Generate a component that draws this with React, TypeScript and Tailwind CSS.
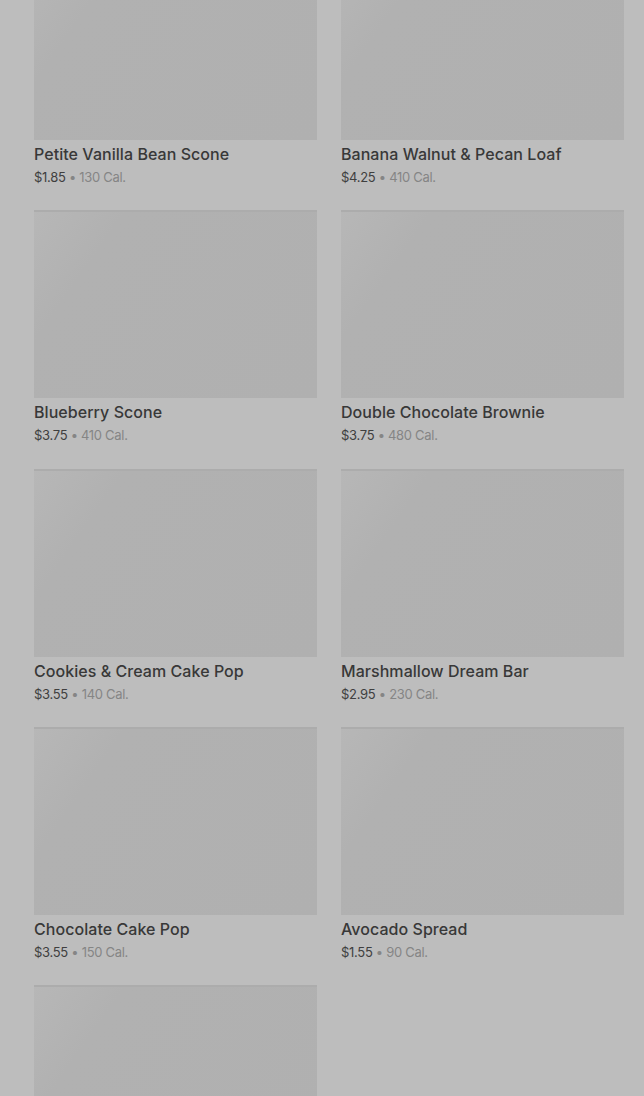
import React from 'react';

type Item = { name: string; price: string; cal: string };

const items: Item[] = [
  { name: 'Petite Vanilla Bean Scone', price: '$1.85', cal: '130 Cal.' },
  { name: 'Banana Walnut & Pecan Loaf', price: '$4.25', cal: '410 Cal.' },
  { name: 'Blueberry Scone', price: '$3.75', cal: '410 Cal.' },
  { name: 'Double Chocolate Brownie', price: '$3.75', cal: '480 Cal.' },
  { name: 'Cookies & Cream Cake Pop', price: '$3.55', cal: '140 Cal.' },
  { name: 'Marshmallow Dream Bar', price: '$2.95', cal: '230 Cal.' },
  { name: 'Chocolate Cake Pop', price: '$3.55', cal: '150 Cal.' },
  { name: 'Avocado Spread', price: '$1.55', cal: '90 Cal.' },
];

function Thumb() {
  // image placeholder, still loading
  return (
    <div className="h-[188px] w-full shrink-0 border-t-2 border-[#acacac] bg-[linear-gradient(125deg,#b7b7b7_0%,#b1b1b1_22%,#b0b0b0_100%)]" />
  );
}

function Card({ item }: { item: Item }) {
  return (
    <div className="flex flex-col">
      <Thumb />
      <div className="mt-0.5 h-6 text-base leading-6 font-medium text-[#383838] tracking-[0.05px]">{item.name}</div>
      <div className="h-[21px] pt-px text-[13px] leading-5 tracking-[-0.3px] text-[#3f3f3f]">
        {item.price}
        <span className="text-[#858585]"> • {item.cal}</span>
      </div>
    </div>
  );
}

export default function App() {
  return (
    <div className="h-[1096px] overflow-hidden bg-[#bdbdbd] font-['Inter',sans-serif]">
      <div className="-mt-[48px] grid grid-cols-2 gap-x-6 gap-y-[23.33px] pl-[34px] pr-[20px]">
        {items.map((item) => (
          <Card key={item.name} item={item} />
        ))}
        <div className="flex flex-col">
          <Thumb />
        </div>
      </div>
    </div>
  );
}
